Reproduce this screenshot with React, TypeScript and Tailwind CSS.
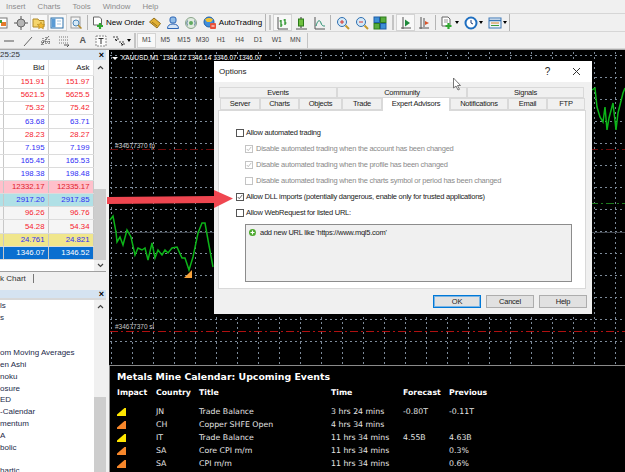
import type { ReactNode } from "react";

const quotes = [
  { bid: "151.91", ask: "151.97", bg: "bg-white", fg: "text-[#f5222d]" },
  { bid: "5621.5", ask: "5625.5", bg: "bg-white", fg: "text-[#f5222d]" },
  { bid: "75.32", ask: "75.42", bg: "bg-white", fg: "text-[#f5222d]" },
  { bid: "63.68", ask: "63.71", bg: "bg-white", fg: "text-[#2f2ff5]" },
  { bid: "28.23", ask: "28.27", bg: "bg-white", fg: "text-[#f5222d]" },
  { bid: "7.195", ask: "7.199", bg: "bg-white", fg: "text-[#2f2ff5]" },
  { bid: "165.45", ask: "165.53", bg: "bg-white", fg: "text-[#2f2ff5]" },
  { bid: "198.38", ask: "198.48", bg: "bg-white", fg: "text-[#2f2ff5]" },
  { bid: "12332.17", ask: "12335.17", bg: "bg-[#ffc0cb]", fg: "text-[#e0202a]" },
  { bid: "2917.20", ask: "2917.85", bg: "bg-[#b0e0e6]", fg: "text-[#2f2ff5]" },
  { bid: "96.26", ask: "96.76", bg: "bg-[#f5f5f5]", fg: "text-[#f5222d]" },
  { bid: "54.28", ask: "54.34", bg: "bg-[#f5f5f5]", fg: "text-[#f5222d]" },
  { bid: "24.761", ask: "24.821", bg: "bg-[#f0e68c]", fg: "text-[#2f2ff5]" },
  { bid: "1346.07", ask: "1346.52", bg: "bg-[#0a6fd0]", fg: "text-white" },
];

const navLines = ["ls", "s", "", "", "om Moving Averages", "en Ashi", "noku", "osure", "ED", "-Calendar", "mentum", "A", "bolic", "", "hartic"];

const events = [
  { color: "#ffe600", country: "JN", title: "Trade Balance", time: "3 hrs 24 mins", forecast: "-0.80T", previous: "-0.11T" },
  { color: "#f7872b", country: "CH", title: "Copper SHFE Open", time: "4 hrs 34 mins", forecast: "", previous: "" },
  { color: "#ffe600", country: "IT", title: "Trade Balance", time: "11 hrs 34 mins", forecast: "4.55B", previous: "4.63B" },
  { color: "#f7872b", country: "SA", title: "Core CPI m/m", time: "11 hrs 34 mins", forecast: "", previous: "0.3%" },
  { color: "#f7872b", country: "SA", title: "CPI m/m", time: "11 hrs 34 mins", forecast: "", previous: "0.6%" },
];

const gridX = Array.from({ length: 25 }, (_, i) => 111 + i * 21);
const gridY = Array.from({ length: 14 }, (_, i) => 55 + i * 22);

function Ico({ children }: { children: ReactNode }) {
  return (
    <svg width="14" height="14" viewBox="0 0 14 14" fill="none" className="shrink-0">
      {children}
    </svg>
  );
}

function Cell({ children, active }: { children: ReactNode; active?: boolean }) {
  return (
    <div
      className={
        "flex h-[17px] w-[18.4px] shrink-0 items-center justify-center " +
        (active ? "border border-[#d4d4d4] bg-[#f8f8f8]" : "")
      }
    >
      {children}
    </div>
  );
}

function Caret() {
  return <span className="ml-[1px] h-0 w-0 border-x-[2.5px] border-t-[3px] border-x-transparent border-t-black" />;
}

function Sep() {
  return <div className="mx-[2px] h-[15px] w-[1px] shrink-0 bg-[#b4b4b4]" />;
}

function Check({ on, off }: { on?: boolean; off?: boolean }) {
  return (
    <span className={"flex h-[8px] w-[8px] shrink-0 items-center justify-center border bg-white " + (off ? "border-[#c4c4c4]" : "border-[#555]")}>
      {on && (
        <svg width="8" height="8" viewBox="0 0 8 8" fill="none">
          <path d="M1 4l2 2.2L7 1.2" stroke={off ? "#aaa" : "#333"} strokeWidth="1" />
        </svg>
      )}
    </span>
  );
}

function Tab({ w, label, active, row1 }: { w: string; label: string; active?: boolean; row1?: boolean }) {
  return (
    <div
      className={
        "flex shrink-0 items-center justify-center border border-[#d9d9d9] " +
        w +
        (active
          ? " z-10 -mt-[1px] h-[14px] border-b-0 bg-white pb-[2px]"
          : row1
            ? " h-[11px] bg-[#f0f0f0]"
            : " h-[12px] bg-[#f0f0f0]")
      }
    >
      {label}
    </div>
  );
}

function Btn({ label, primary }: { label: string; primary?: boolean }) {
  return (
    <div
      className={
        "flex h-[13px] w-[48px] items-center justify-center border bg-[#e1e1e1] " +
        (primary ? "border-[#0078d7] shadow-[inset_0_0_0_1px_#7ab4e4]" : "border-[#adadad]")
      }
    >
      {label}
    </div>
  );
}

function Cross() {
  return <span className="text-[9px] leading-none font-bold text-black">×</span>;
}

function Toolbar1() {
  return (
    <div className="flex h-[19px] items-center border-y border-[#d6d6d6] bg-[#f0f0f0]">
      <div className="-ml-[7px] flex items-center">
        <Cell>
          <Ico>
            <rect x="1" y="2" width="11" height="10" fill="#fff" stroke="#777" />
            <path d="M6 6h5v4H6z" fill="#e57a2b" />
            <path d="M3 4h4v3H3z" fill="#3ca33c" />
          </Ico>
        </Cell>
        <Cell>
          <Ico>
            <circle cx="7" cy="7" r="4" fill="#b5b5b5" stroke="#666" />
            <path d="M7 0v3M7 14v-3M0 7h3M14 7h-3" stroke="#555" />
          </Ico>
        </Cell>
        <Cell active>
          <Ico>
            <path d="M1 3h5l1 1.500h5V11H1z" fill="#f5d56c" stroke="#b08a2a" />
            <path d="M9 6l1.200 2.400 2.600.3-2 1.700.6 2.600L9 11.500 6.600 12.800l.6-2.600-2-1.700 2.600-.3z" fill="#f1b82f" stroke="#a87f1c" strokeWidth=".5" />
          </Ico>
        </Cell>
        <Cell active>
          <Ico>
            <rect x="1" y="2" width="12" height="10" fill="#fff" stroke="#2b6ea8" />
            <rect x="1.500" y="2.500" width="4" height="9" fill="#5a9bd5" />
            <path d="M7 5h4M7 8h4" stroke="#9fc3e2" />
          </Ico>
        </Cell>
        <Cell>
          <Ico>
            <rect x="2" y="1" width="9" height="11" fill="#f4f4f4" stroke="#999" />
            <circle cx="7" cy="7" r="3" fill="#d5e9f7" stroke="#4b86b8" />
            <path d="M9 9l3.500 3.500" stroke="#b48a2c" strokeWidth="1.500" />
          </Ico>
        </Cell>
      </div>
      <Sep />
      <div className="ml-[1px] flex items-center gap-[1px]">
        <Ico>
          <path d="M2.500 1h6l2 2v6h-8z" fill="#fff" stroke="#666" />
          <path d="M9 7v6M6 10h6" stroke="#2fa82f" strokeWidth="2.200" />
        </Ico>
        <span className="text-[8px] font-medium text-black">New Order</span>
      </div>
      <div className="ml-[3px] flex items-center gap-[4.400px]">
        <Ico>
          <path d="M1.500 6L6 2l6.500 5.500L9 12z" fill="#e2b136" stroke="#94701d" />
          <path d="M4 6l5 4" stroke="#94701d" />
        </Ico>
        <Ico>
          <rect x="4" y="1" width="6" height="6" rx="2" fill="#8fbbe6" stroke="#2b64b5" />
          <path d="M1.500 12.500c0-3 2-4.500 5.500-4.500s5.500 1.500 5.500 4.500z" fill="#d6e5f6" stroke="#2b64b5" />
        </Ico>
        <Ico>
          <circle cx="7" cy="7" r="5.500" fill="#dfeadf" stroke="#8aa58a" />
          <circle cx="7" cy="7" r="2" fill="#5faa5f" />
          <path d="M3.500 4.500a5 5 0 000 5M10.500 4.500a5 5 0 010 5" stroke="#5b7d9b" />
        </Ico>
        <Ico>
          <circle cx="6" cy="6" r="5" fill="#3f8edc" stroke="#1f5ea5" />
          <path d="M2 3.500c2-2 6-2 8 0L8 6H4z" fill="#f1c232" />
          <rect x="7" y="7" width="6" height="6" rx="1" fill="#e8503a" />
          <path d="M8.500 10h3" stroke="#fff" />
        </Ico>
      </div>
      <span className="ml-[2px] text-[8px] font-medium text-black">AutoTrading</span>
      <div className="ml-[3px] h-[17px] w-[1px] bg-[#b4b4b4]" />
      <div className="ml-[3px] h-[15px] w-[2px] border-x border-[#c4c4c4]" />
      <div className="ml-[2px] flex items-center">
        <Cell active>
          <Ico>
            <path d="M3 1v12M3 13h10" stroke="#555" />
            <path d="M6 4v7M6 5H4.500M6 9h1.500M10 3v6M10 4H8.500M10 7h1.500" stroke="#178a17" strokeWidth="1.200" />
          </Ico>
        </Cell>
        <Cell>
          <Ico>
            <path d="M2 13h11" stroke="#555" />
            <path d="M7 1v11" stroke="#333" />
            <rect x="4.500" y="3" width="5" height="7" fill="#6fbf3f" stroke="#2c7a1a" />
          </Ico>
        </Cell>
        <Cell>
          <Ico>
            <path d="M3 1v12M3 13h10" stroke="#555" />
            <path d="M4 10c2-7 4-6 5-3s2 3 4 3" stroke="#1d8a6a" />
          </Ico>
        </Cell>
      </div>
      <Sep />
      <div className="ml-[1px] flex items-center">
        <Cell>
          <Ico>
            <circle cx="6" cy="6" r="4.500" fill="#d5e9f7" stroke="#2e6fb0" />
            <path d="M4 6h4M6 4v4" stroke="#d9342b" />
            <path d="M9.500 9.500l3.500 3.500" stroke="#c49a2b" strokeWidth="2" />
          </Ico>
        </Cell>
        <Cell>
          <Ico>
            <circle cx="6" cy="6" r="4.500" fill="#d5e9f7" stroke="#2e6fb0" />
            <path d="M4 6h4" stroke="#d9342b" />
            <path d="M9.500 9.500l3.500 3.500" stroke="#c49a2b" strokeWidth="2" />
          </Ico>
        </Cell>
        <Cell>
          <Ico>
            <rect x="1" y="1" width="5.500" height="5.500" fill="#3d8fd6" stroke="#1f5ea5" />
            <rect x="7.500" y="1" width="5.500" height="5.500" fill="#58ad3c" stroke="#2e7d1f" />
            <rect x="1" y="7.500" width="5.500" height="5.500" fill="#58ad3c" stroke="#2e7d1f" />
            <rect x="7.500" y="7.500" width="5.500" height="5.500" fill="#3d8fd6" stroke="#1f5ea5" />
          </Ico>
        </Cell>
      </div>
      <div className="ml-[3px] h-[15px] w-[2px] border-x border-[#c4c4c4]" />
      <div className="ml-[2px] flex items-center">
        <Cell active>
          <Ico>
            <path d="M4 1v12M2 12h10" stroke="#555" />
            <path d="M6 3.500L11 7l-5 3.500z" fill="#1d8a3a" />
          </Ico>
        </Cell>
        <Cell>
          <Ico>
            <path d="M4 1v12M2 12h10M7 2v9" stroke="#555" />
            <path d="M8 5l4 2-4 2z" fill="#d9542b" />
          </Ico>
        </Cell>
      </div>
      <Sep />
      <div className="ml-[2px] flex items-center gap-[5px]">
        <div className="flex items-center">
          <Ico>
            <path d="M2 1h6l2 2v7H2z" fill="#fff" stroke="#666" />
            <path d="M4 4h4M4 6h4" stroke="#999" />
            <path d="M8.500 7v6M5.500 10h6" stroke="#2fa82f" strokeWidth="2.200" />
          </Ico>
          <Caret />
        </div>
        <div className="flex items-center">
          <Ico>
            <circle cx="7" cy="7" r="5.500" fill="#fff" stroke="#1f6fc0" strokeWidth="2" />
            <path d="M7 4v3l2 1" stroke="#1f3f7a" />
          </Ico>
          <Caret />
        </div>
        <div className="flex items-center">
          <Ico>
            <rect x="1" y="2" width="12" height="10" fill="#eef3f8" stroke="#3a76b5" />
            <path d="M1 4.500h12" stroke="#3a76b5" strokeWidth="1.500" />
            <path d="M3 7h8" stroke="#d9842b" />
            <path d="M3 9.500h8" stroke="#3c9a3c" />
          </Ico>
          <Caret />
        </div>
      </div>
      <div className="ml-[2px] h-[17px] w-[1px] bg-[#b4b4b4]" />
    </div>
  );
}

function Toolbar2() {
  const periods = ["M1", "M5", "M15", "M30", "H1", "H4", "D1", "W1", "MN"];
  return (
    <div className="flex h-[17px] items-center border-b border-[#d6d6d6] bg-[#f0f0f0] pt-[1px]">
      <div className="flex items-center">
        <Cell>
          <Ico>
            <path d="M2 7h10" stroke="#555" />
          </Ico>
        </Cell>
        <Cell>
          <Ico>
            <path d="M3 12L11 3" stroke="#666" />
          </Ico>
        </Cell>
        <Cell>
          <Ico>
            <path d="M2 11l8-9" stroke="#777" />
            <path d="M4 4v7M7 3v8M10 5v6M2 8h10" stroke="#444" strokeDasharray="1 1" />
          </Ico>
        </Cell>
        <Cell>
          <Ico>
            <path d="M2 3h10M2 6h10M2 9h10" stroke="#777" strokeDasharray="1 1" />
            <path d="M7 11h5l-2 2" stroke="#555" />
          </Ico>
        </Cell>
        <Cell>
          <span className="text-[9px] font-bold text-[#555]">A</span>
        </Cell>
        <Cell>
          <Ico>
            <rect x="2" y="2" width="10" height="10" fill="#fbfbfb" stroke="#888" strokeDasharray="2 1" />
            <path d="M4.500 4.500h5M7 4.500v5.500" stroke="#333" />
          </Ico>
        </Cell>
      </div>
      <div className="flex w-[24px] items-center pl-[2px]">
        <Ico>
          <path d="M1 3h5v3H3M7 8h5v3H9" stroke="#444" strokeDasharray="2 1" />
          <path d="M3 5l2 2M9 9l2 2" stroke="#222" />
        </Ico>
        <Caret />
      </div>
      <div className="h-[15px] w-[2px] border-x border-[#c4c4c4]" />
      <div className="ml-[1px] flex items-center">
        {periods.map((p, i) => (
          <div
            key={p}
            className={
              "flex h-[15px] w-[18.600px] items-center justify-center text-[6.800px] text-[#444] " +
              (i === 0 ? "border border-[#d4d4d4] bg-[#f8f8f8]" : "")
            }
          >
            {p}
          </div>
        ))}
      </div>
      <div className="ml-[2px] h-[15px] w-[1px] bg-[#c4c4c4]" />
    </div>
  );
}

function MarketWatch() {
  return (
    <div className="flex h-[221px] shrink-0 flex-col">
      <div className="flex h-[10px] items-center justify-between bg-[#d5e3f1] pr-[2px] text-[8px] leading-none text-[#333]">
        <span>25:25</span>
        <Cross />
      </div>
      <div className="flex flex-1 bg-white">
        <div className="w-[94px]">
          <div className="flex h-[16px] items-center border-b border-[#e3e3e3] text-[8px] text-[#222]">
            <div className="h-full w-[4px] border-r border-[#e3e3e3]" />
            <div className="flex h-full w-[44.500px] items-center justify-end border-r border-[#e3e3e3] pr-[3px]">Bid</div>
            <div className="flex h-full w-[45px] items-center justify-end border-r border-[#e3e3e3] pr-[3px]">Ask</div>
          </div>
          {quotes.map((q) => (
            <div key={q.bid} className={"flex h-[13.140px] items-center border-b border-[#dcdcdc] text-[7.800px] leading-none " + q.bg + " " + q.fg}>
              <div className="h-full w-[4px] border-r border-[#c8c8c8]" />
              <div className="flex h-full w-[44.500px] items-center justify-end border-r border-[#c8c8c8] pr-[3px]">{q.bid}</div>
              <div className="flex h-full w-[45px] items-center justify-end border-r border-[#c8c8c8] pr-[3px]">{q.ask}</div>
            </div>
          ))}
        </div>
        <div className="flex w-[12px] flex-col bg-[#f0f0f0]">
          <div className="flex h-[14px] items-center justify-center">
            <svg width="7" height="5" viewBox="0 0 7 5" fill="none">
              <path d="M1 4l2.500-2.500L6 4" stroke="#444" strokeWidth="1.200" />
            </svg>
          </div>
          <div className="mt-[115px] h-[71px] bg-[#cdcdcd]" />
          <div className="flex h-[11px] items-center justify-center">
            <svg width="7" height="5" viewBox="0 0 7 5" fill="none">
              <path d="M1 1l2.500 2.500L6 1" stroke="#444" strokeWidth="1.200" />
            </svg>
          </div>
        </div>
      </div>
    </div>
  );
}

function Navigator() {
  return (
    <div className="flex min-h-0 flex-1 flex-col overflow-hidden">
      <div className="flex h-[14px] shrink-0 items-center border-t border-[#a0a0a0] bg-[#f0f0f0] text-[8px] text-[#333]">
        <span>k Chart</span>
        <span className="ml-[7px] h-[9px] w-[1px] bg-[#777]" />
      </div>
      <div className="h-[5px] shrink-0" />
      <div className="flex h-[8px] shrink-0 items-center justify-between bg-[#d5e3f1] pr-[2px]">
        <span />
        <Cross />
      </div>
      <div className="h-[2px] shrink-0 bg-[#d8d8d8]" />
      <div className="flex min-h-0 flex-1 bg-white">
        <div className="w-[94px] overflow-hidden text-[8px] text-[#1c2b4a]">
          {navLines.map((line, i) => (
            <div key={i} className="h-[11.800px] whitespace-nowrap leading-[11.800px]">
              {line}
            </div>
          ))}
        </div>
        <div className="flex w-[12px] flex-col bg-[#f0f0f0]">
          <div className="flex h-[12px] items-center justify-center">
            <svg width="7" height="5" viewBox="0 0 7 5" fill="none">
              <path d="M1 4l2.500-2.500L6 4" stroke="#444" strokeWidth="1.200" />
            </svg>
          </div>
          <div className="mt-[85px] flex-1 bg-[#cdcdcd]" />
        </div>
      </div>
    </div>
  );
}

function ChartDrawing() {
  const left =
    "110,220 113,216 116,232 117,242 120,237 123,245 127,230 131,237 135,255 138,248 142,250 145,248 148,260 152,243 155,258 158,250 162,255 165,250 168,253 172,248 177,247 182,258 185,258 189,270 193,257 198,233 202,223 205,223 208,240 213,267";
  const right =
    "592,90 595,88 597,107 600,117 603,122 605,107 607,130 609,118 613,103 616,130 618,113 623,93 625,88";
  return (
    <svg className="absolute inset-0 h-full w-full" viewBox="109 52 516 313" preserveAspectRatio="none" fill="none">
      {gridX.map((x) => (
        <path key={x} d={`M${x + 0.5} 52V365`} stroke="#7d8a99" strokeDasharray="2 3" strokeWidth="1" />
      ))}
      {gridY.map((y) => (
        <path key={y} d={`M110 ${y + 0.5}H625`} stroke="#7d8a99" strokeDasharray="2 3" strokeWidth="1" />
      ))}
      <path d="M110 232.500H625" stroke="#3e434a" strokeWidth="1.200" />
      <path d="M110 149.500H625" stroke="#6c0a0a" strokeWidth="1.200" strokeDasharray="8 3 2 3" />
      <path d="M110 331.500H625" stroke="#b01010" strokeWidth="1" strokeDasharray="8 3 2 3" />
      <path d="M590 203.500H625" stroke="#1c7a1c" strokeWidth="1" strokeDasharray="8 3 2 3" />
      <polyline points={left} stroke="#0cb418" strokeWidth="1.500" />
      <polyline points={right} stroke="#0cb418" strokeWidth="1.500" />
      <path d="M184 278h8v-8z" fill="#f7a23b" />
    </svg>
  );
}

function OptionsDialog() {
  return (
    <div className="absolute top-[9px] left-[105px] flex h-[253px] w-[378px] flex-col bg-[#f0f0f0] text-[7.500px] leading-none tracking-[-0.25px] text-[#222]">
      <div className="flex h-[21px] shrink-0 items-center justify-between bg-white pr-[11px] pl-[5px]">
        <span className="text-[8px] tracking-normal">Options</span>
        <div className="flex items-center gap-[22px]">
          <span className="text-[10px]">?</span>
          <svg width="9" height="9" viewBox="0 0 9 9" fill="none">
            <path d="M1 1l7 7M8 1L1 8" stroke="#333" strokeWidth="1" />
          </svg>
        </div>
      </div>
      <div className="mt-[5px] ml-[5px] flex">
        <Tab row1 w="w-[118px]" label="Events" />
        <Tab row1 w="w-[130px]" label="Community" />
        <Tab row1 w="w-[117px]" label="Signals" />
      </div>
      <div className="ml-[6px] flex h-[12px] items-start">
        <Tab w="w-[40px]" label="Server" />
        <Tab w="w-[39px]" label="Charts" />
        <Tab w="w-[43px]" label="Objects" />
        <Tab w="w-[40px]" label="Trade" />
        <Tab w="w-[68px]" active label="Expert Advisors" />
        <Tab w="w-[58px]" label="Notifications" />
        <Tab w="w-[39px]" label="Email" />
        <Tab w="w-[38px]" label="FTP" />
      </div>
      <div className="mx-[4px] h-[179px] w-[368px] border border-[#d9d9d9] bg-white pt-[14px] pl-[17px]">
        <div className="flex h-[16px] items-center gap-[2px]">
          <Check />
          <span>Allow automated trading</span>
        </div>
        {[
          { on: true, t: "Disable automated trading when the account has been changed" },
          { on: true, t: "Disable automated trading when the profile has been changed" },
          { on: false, t: "Disable automated trading when the charts symbol or period has been changed" },
        ].map((r) => (
          <div key={r.t} className="flex h-[16px] items-center gap-[3px] pl-[9px] text-[#8a8a8a]">
            <Check off on={r.on} />
            <span>{r.t}</span>
          </div>
        ))}
        <div className="flex h-[16px] items-center gap-[2px]">
          <Check on />
          <span>Allow DLL imports (potentially dangerous, enable only for trusted applications)</span>
        </div>
        <div className="flex h-[15px] items-center gap-[2px]">
          <Check />
          <span>Allow WebRequest for listed URL:</span>
        </div>
        <div className="mt-[4px] ml-[9px] h-[58px] w-[327px] border border-[#8c8c8c] bg-[#f0f0f0]">
          <div className="flex h-[15px] items-center gap-[2px] pl-[3px]">
            <svg width="7" height="7" viewBox="0 0 7 7">
              <circle cx="3.500" cy="3.500" r="3.500" fill="#4ca82e" />
              <path d="M1.500 3.500h4M3.500 1.500v4" stroke="#fff" strokeWidth="1.200" />
            </svg>
            <span className="ml-[2px]">add new URL like 'https://www.mql5.com'</span>
          </div>
        </div>
      </div>
      <div className="mt-[6px] flex justify-end gap-[5px] pr-[5px]">
        <Btn primary label="OK" />
        <Btn label="Cancel" />
        <Btn label="Help" />
      </div>
    </div>
  );
}

function Calendar() {
  const row = "grid grid-cols-[39px_43px_132px_72px_46px_1fr] items-center";
  return (
    <div className="h-[107px] shrink-0 border-t border-l border-[#8a8a8a] bg-black pl-[7px] font-['DejaVu_Sans',sans-serif] text-white">
      <div className="mt-[4px] h-[14px] text-[9.400px] leading-[14px] font-bold">Metals Mine Calendar: Upcoming Events</div>
      <div className={row + " mt-[2px] h-[13px] text-[7.800px] font-bold"}>
        <span>Impact</span>
        <span>Country</span>
        <span>Title</span>
        <span>Time</span>
        <span>Forecast</span>
        <span>Previous</span>
      </div>
      <div className="mt-[6px] text-[7.800px] text-[#e4e4e4]">
        {events.map((e, i) => (
          <div key={i} className={row + " h-[13px]"}>
            <svg width="9" height="8" viewBox="0 0 9 8">
              <path d="M0 8h9V0H7.500L0 6.500z" fill={e.color} />
            </svg>
            <span>{e.country}</span>
            <span>{e.title}</span>
            <span>{e.time}</span>
            <span>{e.forecast}</span>
            <span>{e.previous}</span>
          </div>
        ))}
      </div>
    </div>
  );
}

export default function App() {
  const menus = ["Insert", "Charts", "Tools", "Window", "Help"];
  return (
    <div className="relative flex h-[472px] w-[625px] flex-col overflow-hidden bg-[#f0f0f0] font-['Liberation_Sans',sans-serif]">
      <div className="flex h-[13px] items-center gap-[12px] pl-[6px] text-[7.800px] leading-none text-[#8c8c8c]">
        {menus.map((m) => (
          <span key={m}>{m}</span>
        ))}
      </div>
      <Toolbar1 />
      <Toolbar2 />
      <div className="h-[1px] bg-[#a8a8a8]" />
      <div className="flex min-h-0 flex-1">
        <div className="flex w-[106px] flex-col bg-[#f0f0f0]">
          <MarketWatch />
          <Navigator />
        </div>
        <div className="ml-[3px] flex flex-1 flex-col bg-black pt-[2px]">
          <div className="relative flex-1">
            <ChartDrawing />
            <div className="absolute top-[1px] left-[3px] flex items-center gap-[2px] text-[6.500px] leading-[10px] whitespace-nowrap text-white">
              <span className="h-0 w-0 border-x-[3px] border-t-[3px] border-x-transparent border-t-white" />
              <span className="ml-[1px]">XAUUSD,M1 &nbsp;1346.12 1346.14 1346.07 1346.07</span>
            </div>
            <span className="absolute top-[89px] left-[6px] text-[6.500px] leading-[10px] text-[#c8c8c8]">#34677370 tp</span>
            <span className="absolute top-[270px] left-[6px] text-[6.500px] leading-[10px] text-[#c8c8c8]">#34677370 sl</span>
            <OptionsDialog />
          </div>
          <Calendar />
        </div>
      </div>
      <svg className="absolute top-[185px] left-[105px]" width="130" height="28" viewBox="105 185 130 28">
        <path d="M107 197L214 196V190L233 198.500L214 208V203L107 204z" fill="#ef4650" />
      </svg>
      <svg className="absolute top-[77px] left-[452px]" width="10" height="15" viewBox="0 0 10 15" fill="none">
        <path d="M1.500 1v10l2.500-2 2 4 1.500-.7-2-3.800h3z" fill="#fff" stroke="#555" strokeWidth=".8" />
      </svg>
    </div>
  );
}
